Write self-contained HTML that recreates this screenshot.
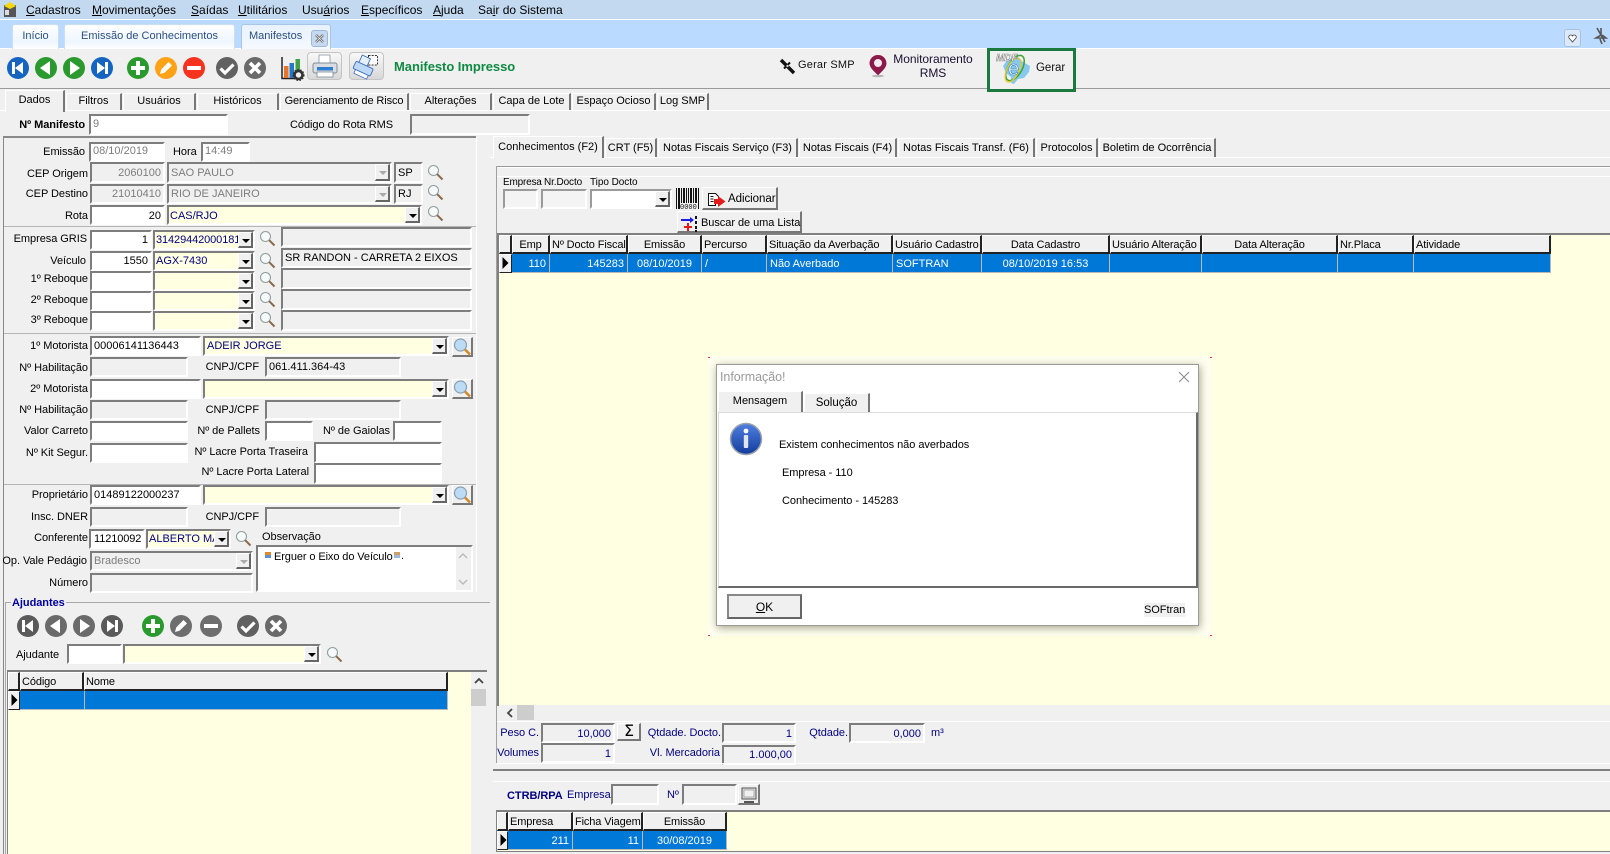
<!DOCTYPE html>
<html lang="pt"><head><meta charset="utf-8"><title>Manifestos</title>
<style>
html,body{margin:0;padding:0;width:1610px;height:854px;overflow:hidden;background:#f0f0f0}
body{position:relative;font:11px/14px "Liberation Sans",Arial,sans-serif;color:#000}
div,span.t{box-sizing:border-box}
.b{position:absolute}
.t{position:absolute;white-space:nowrap;font:11px/14px "Liberation Sans",Arial,sans-serif;margin-top:1px;letter-spacing:-.05px}
.r{left:0;text-align:right}
.i{position:absolute;box-sizing:border-box;background:#fff;border-top:2px solid #7d7d7d;border-left:2px solid #7d7d7d;border-right:2px solid #fff;border-bottom:2px solid #fff;font:11px/17px "Liberation Sans",Arial,sans-serif;padding:0 2px;overflow:hidden;white-space:nowrap}
.d{background:#f0f0f0}
.g{color:#7d7d7d}
.n{color:#000080}
.ta{text-align:right}
.c{background:#ffffe1;color:#000080;padding:0 1px}
.a{position:absolute;right:0;top:0;bottom:0;width:15px;background:#f0f0f0;border-right:2px solid #666;border-bottom:2px solid #666;border-top:1px solid #fff;border-left:1px solid #fff}
.a:after{content:"";position:absolute;left:3px;top:6px;border-left:4px solid transparent;border-right:4px solid transparent;border-top:4px solid #000}
.a.off:after{border-top-color:#aaa}
.tab{position:absolute;box-sizing:border-box;text-align:center;font:11px/20px "Liberation Sans",Arial,sans-serif;border-left:1px solid #fff;border-top:1px solid #fff;border-right:2px solid #777;white-space:nowrap;background:#f0f0f0}
.sel{line-height:19px}
.tt{position:absolute;box-sizing:border-box;top:24px;height:25px;background:linear-gradient(#fff,#eef6ff 70%,#fff);border:1px solid #c9ddf5;border-bottom:0;border-radius:3px 3px 0 0;color:#2b4f7e;font:11px/23px "Liberation Sans",Arial,sans-serif;text-align:center}
.h{position:absolute;box-sizing:border-box;background:#f0f0f0;border-top:1px solid #fff;border-left:1px solid #fff;border-right:2px solid #222;border-bottom:2px solid #222;font:11px/18px "Liberation Sans",Arial,sans-serif;letter-spacing:-.12px;padding:0 1px;white-space:nowrap;overflow:hidden}
.ce{position:absolute;box-sizing:border-box;background:#0078d7;color:#fff;border-right:1px solid #b8b8b8;border-bottom:1px solid #b8b8b8;font:11px/20px "Liberation Sans",Arial,sans-serif;padding:0 3px;white-space:nowrap;overflow:hidden}
.ctr{text-align:center}
.m{position:absolute;top:3px;font:12px/14px "Liberation Sans",Arial,sans-serif;white-space:nowrap}
.btn{position:absolute;box-sizing:border-box;background:#f0f0f0;border-top:1px solid #fff;border-left:1px solid #fff;border-right:2px solid #777;border-bottom:2px solid #777}
.ic{position:absolute;box-sizing:border-box;background:linear-gradient(#f8f8f8,#d8d8d8);border:1px solid #c4c4c4;border-radius:4px}
.sep{position:absolute;height:1px;background:#9a9a9a}
.wl{position:absolute;height:1px;background:#fff}
.f{border-color:#9a9a9a #fff #fff #9a9a9a;background:#f4f4f4}
</style></head><body>

<!-- top bars -->
<div class="b" style="left:0;top:0;width:1610px;height:19px;background:#c3d9f0"></div>
<div class="b" style="left:0;top:19px;width:1610px;height:1px;background:#fff"></div>
<div class="b" style="left:0;top:20px;width:1610px;height:28px;background:#bbdaff"></div>
<div class="b" style="left:0;top:48px;width:1610px;height:1px;background:#fff"></div>
<span class="m" style="left:26px"><u>C</u>adastros</span>
<span class="m" style="left:92px"><u>M</u>ovimentações</span>
<span class="m" style="left:191px"><u>S</u>aídas</span>
<span class="m" style="left:238px"><u>U</u>tilitários</span>
<span class="m" style="left:302px">Usu<u>á</u>rios</span>
<span class="m" style="left:361px"><u>E</u>specíficos</span>
<span class="m" style="left:433px"><u>A</u>juda</span>
<span class="m" style="left:478px">Sa<u>i</u>r do Sistema</span>

<div class="tt" style="left:12px;width:47px">Início</div>
<div class="tt" style="left:64px;width:171px">Emissão de Conhecimentos</div>
<div class="tt" style="left:241px;width:90px;text-align:left;padding-left:7px;background:linear-gradient(#e8f2ff,#f5f9ff);border-color:#a9c6ea">Manifestos</div>
<div class="b" style="left:311px;top:30px;width:17px;height:17px;background:#c5d9f1;border:1px solid #9fb8d8;border-radius:3px"></div>
<div class="b" style="left:1564px;top:29px;width:17px;height:18px;background:#dbe9fb;border:1px solid #a9c0de;border-radius:3px"></div>

<!-- toolbar -->
<div class="sep" style="left:0;top:88px;width:1610px"></div>
<div class="wl" style="left:0;top:110px;width:1610px"></div>
<div class="ic" style="left:307px;top:52px;width:35px;height:28px"></div>
<div class="ic" style="left:349px;top:52px;width:35px;height:28px"></div>
<div class="t" style="left:394px;top:59px;font-weight:bold;font-size:13px;color:#0e8a43;font-family:'Liberation Sans',sans-serif">Manifesto Impresso</div>
<div class="t" style="left:798px;top:57px;font-size:11px;color:#111;letter-spacing:.2px">Gerar SMP</div>
<div class="t" style="left:888px;top:51px;width:90px;text-align:center;font-size:12px;color:#1a1030">Monitoramento</div>
<div class="t" style="left:888px;top:65px;width:90px;text-align:center;font-size:12px;color:#1a1030">RMS</div>
<div class="b" style="left:987px;top:48px;width:89px;height:44px;border:3px solid #1a7a3e;background:#f0f0f0"></div>
<div class="t" style="left:1036px;top:60px;font-size:11.5px;color:#111">Gerar</div>

<!-- main tabs -->
<div class="tab sel" style="left:5px;top:90px;width:60px;height:22px;border-bottom:0">Dados</div>
<div class="tab" style="left:66px;top:93px;width:56px;height:17px;line-height:15px">Filtros</div>
<div class="tab" style="left:123px;top:93px;width:73px;height:17px;line-height:15px">Usuários</div>
<div class="tab" style="left:197px;top:93px;width:82px;height:17px;line-height:15px">Históricos</div>
<div class="tab" style="left:280px;top:93px;width:129px;height:17px;line-height:15px;letter-spacing:-.1px">Gerenciamento de Risco</div>
<div class="tab" style="left:410px;top:93px;width:82px;height:17px;line-height:15px">Alterações</div>
<div class="tab" style="left:493px;top:93px;width:78px;height:17px;line-height:15px">Capa de Lote</div>
<div class="tab" style="left:572px;top:93px;width:84px;height:17px;line-height:15px">Espaço Ocioso</div>
<div class="tab" style="left:657px;top:93px;width:52px;height:17px;line-height:15px">Log SMP</div>

<div class="t r" style="width:85px;top:117px;font-weight:bold">Nº Manifesto</div>
<div class="i g" style="left:89px;top:114px;width:139px;height:21px">9</div>
<div class="t" style="left:290px;top:117px">Código do Rota RMS</div>
<div class="i d" style="left:410px;top:114px;width:120px;height:21px"></div>

<!-- left panel frame -->
<div class="sep" style="left:3px;top:136px;width:473px;height:2px;background:#888"></div>
<div class="b" style="left:3px;top:136px;width:1px;height:718px;background:#888"></div>
<div class="wl" style="left:476px;top:137px;width:1px;height:455px"></div>

<div class="t r" style="width:85px;top:144px">Emissão</div>
<div class="i g" style="left:89px;top:142px;width:76px;height:20px;line-height:15px">08/10/2019</div>
<div class="t" style="left:173px;top:144px">Hora</div>
<div class="i g" style="left:201px;top:142px;width:49px;height:20px;line-height:15px">14:49</div>

<div class="t r" style="width:88px;top:166px">CEP Origem</div>
<div class="i d g ta" style="left:90px;top:162px;width:75px;height:21px;line-height:19px">2060100</div>
<div class="i d g" style="left:167px;top:162px;width:225px;height:21px;line-height:19px">SAO PAULO<div class="a off"></div></div>
<div class="i d" style="left:394px;top:162px;width:29px;height:21px;line-height:19px">SP</div>

<div class="t r" style="width:88px;top:186px">CEP Destino</div>
<div class="i d g ta" style="left:90px;top:184px;width:75px;height:20px">21010410</div>
<div class="i d g" style="left:167px;top:184px;width:225px;height:20px">RIO DE JANEIRO<div class="a off"></div></div>
<div class="i d" style="left:394px;top:184px;width:29px;height:20px">RJ</div>

<div class="t r" style="width:88px;top:208px">Rota</div>
<div class="i ta" style="left:90px;top:205px;width:75px;height:20px;line-height:19px">20</div>
<div class="i c" style="left:167px;top:205px;width:255px;height:20px;line-height:19px">CAS/RJO<div class="a"></div></div>

<div class="sep" style="left:4px;top:226px;width:472px;background:#b5b5b5"></div>

<div class="t r" style="width:87px;top:231px">Empresa GRIS</div>
<div class="i ta" style="left:90px;top:230px;width:62px;height:20px">1</div>
<div class="i c" style="left:153px;top:230px;width:102px;height:20px;letter-spacing:-.1px">31429442000181<div class="a"></div></div>
<div class="i d" style="left:281px;top:227px;width:191px;height:20px"></div>

<div class="t r" style="width:86px;top:253px">Veículo</div>
<div class="i ta" style="left:90px;top:251px;width:62px;height:20px">1550</div>
<div class="i c" style="left:153px;top:251px;width:102px;height:20px">AGX-7430<div class="a"></div></div>
<div class="i d" style="left:281px;top:248px;width:191px;height:20px;line-height:17px">SR RANDON - CARRETA 2 EIXOS</div>

<div class="t r" style="width:88px;top:271px">1º Reboque</div>
<div class="i" style="left:90px;top:271px;width:62px;height:20px"></div>
<div class="i c" style="left:153px;top:271px;width:102px;height:20px"><div class="a"></div></div>
<div class="i d" style="left:281px;top:268px;width:191px;height:21px"></div>

<div class="t r" style="width:88px;top:292px">2º Reboque</div>
<div class="i" style="left:90px;top:291px;width:62px;height:20px"></div>
<div class="i c" style="left:153px;top:291px;width:102px;height:20px"><div class="a"></div></div>
<div class="i d" style="left:281px;top:289px;width:191px;height:21px"></div>

<div class="t r" style="width:88px;top:312px">3º Reboque</div>
<div class="i" style="left:90px;top:311px;width:62px;height:20px"></div>
<div class="i c" style="left:153px;top:311px;width:102px;height:20px"><div class="a"></div></div>
<div class="i d" style="left:281px;top:310px;width:191px;height:21px"></div>

<div class="sep" style="left:4px;top:333px;width:472px;background:#b5b5b5"></div>

<div class="t r" style="width:88px;top:338px">1º Motorista</div>
<div class="i" style="left:90px;top:336px;width:111px;height:20px">00006141136443</div>
<div class="i c" style="left:203px;top:336px;width:246px;height:20px;padding:0 2px">ADEIR JORGE<div class="a"></div></div>
<div class="btn" style="left:452px;top:337px;width:21px;height:20px"></div>

<div class="t r" style="width:88px;top:360px">Nº Habilitação</div>
<div class="i d" style="left:90px;top:357px;width:98px;height:20px"></div>
<div class="t r" style="width:259px;top:359px">CNPJ/CPF</div>
<div class="i d" style="left:265px;top:357px;width:136px;height:20px">061.411.364-43</div>

<div class="t r" style="width:88px;top:381px">2º Motorista</div>
<div class="i" style="left:90px;top:379px;width:111px;height:20px"></div>
<div class="i c" style="left:203px;top:379px;width:246px;height:20px"><div class="a"></div></div>
<div class="btn" style="left:452px;top:379px;width:21px;height:20px"></div>

<div class="t r" style="width:88px;top:402px">Nº Habilitação</div>
<div class="i d" style="left:90px;top:400px;width:98px;height:20px"></div>
<div class="t r" style="width:259px;top:402px">CNPJ/CPF</div>
<div class="i d" style="left:265px;top:400px;width:136px;height:20px"></div>

<div class="t r" style="width:88px;top:423px">Valor Carreto</div>
<div class="i" style="left:90px;top:421px;width:98px;height:20px"></div>
<div class="t r" style="width:260px;top:423px">Nº de Pallets</div>
<div class="i" style="left:265px;top:421px;width:48px;height:20px"></div>
<div class="t r" style="width:390px;top:423px">Nº de Gaiolas</div>
<div class="i" style="left:393px;top:421px;width:49px;height:20px"></div>

<div class="t r" style="width:88px;top:445px">Nº Kit Segur.</div>
<div class="i" style="left:90px;top:443px;width:98px;height:20px"></div>
<div class="t r" style="width:308px;top:444px">Nº Lacre Porta Traseira</div>
<div class="i" style="left:314px;top:442px;width:128px;height:21px"></div>
<div class="t r" style="width:309px;top:464px">Nº Lacre Porta Lateral</div>
<div class="i" style="left:314px;top:463px;width:128px;height:21px"></div>

<div class="sep" style="left:4px;top:484px;width:472px;background:#b5b5b5"></div>

<div class="t r" style="width:88px;top:487px">Proprietário</div>
<div class="i" style="left:90px;top:485px;width:111px;height:20px">01489122000237</div>
<div class="i c" style="left:203px;top:485px;width:246px;height:20px"><div class="a"></div></div>
<div class="btn" style="left:452px;top:485px;width:21px;height:20px"></div>

<div class="t r" style="width:88px;top:509px">Insc. DNER</div>
<div class="i d" style="left:90px;top:507px;width:98px;height:20px"></div>
<div class="t r" style="width:259px;top:509px">CNPJ/CPF</div>
<div class="i d" style="left:265px;top:507px;width:136px;height:20px"></div>

<div class="t r" style="width:88px;top:530px">Conferente</div>
<div class="i" style="left:89px;top:529px;width:56px;height:20px;padding:0 3px;letter-spacing:-.1px">11210092</div>
<div class="i c" style="left:146px;top:529px;width:85px;height:20px">ALBERTO MARTI<div class="a"></div></div>
<div class="t" style="left:262px;top:529px">Observação</div>

<div class="t r" style="width:87px;top:553px">Op. Vale Pedágio</div>
<div class="i d g" style="left:90px;top:551px;width:163px;height:20px">Bradesco<div class="a off"></div></div>
<div class="t r" style="width:88px;top:575px">Número</div>
<div class="i d" style="left:90px;top:573px;width:163px;height:20px"></div>

<div class="i" style="left:256px;top:545px;width:217px;height:47px;padding:3px 4px 0 16px;line-height:15px;letter-spacing:-.1px">Erguer o Eixo do Veículo</div>
<div class="t" style="left:401px;top:548px">.</div>
<div class="b" style="left:456px;top:547px;width:15px;height:43px;background:#f0f0f0"></div>

<!-- ajudantes -->
<div class="b" style="left:5px;top:602px;width:485px;height:252px;border:1px solid #a8a8a8;border-bottom:0;border-right:0"></div>
<div class="t n" style="left:11px;top:595px;padding:0 1px;background:#f0f0f0;font-weight:bold;color:#0000a0">Ajudantes</div>
<div class="t" style="left:16px;top:647px">Ajudante</div>
<div class="i" style="left:67px;top:644px;width:55px;height:20px"></div>
<div class="i c" style="left:123px;top:644px;width:198px;height:20px"><div class="a"></div></div>

<div class="b" style="left:7px;top:670px;width:480px;height:184px;background:#ffffe1;border-top:2px solid #808080;border-left:1px solid #808080"></div>
<div class="h" style="left:8px;top:672px;width:12px;height:19px"></div>
<div class="h" style="left:20px;top:672px;width:64px;height:19px">Código</div>
<div class="h" style="left:84px;top:672px;width:364px;height:19px">Nome</div>
<div class="h" style="left:8px;top:691px;width:12px;height:19px;border-right:1px solid #222;border-bottom:1px solid #222"></div>
<div class="ce" style="left:20px;top:691px;width:65px;height:19px"></div>
<div class="ce" style="left:85px;top:691px;width:363px;height:19px"></div>
<div class="b" style="left:471px;top:672px;width:16px;height:182px;background:#f0f0f0"></div>
<div class="b" style="left:471px;top:689px;width:15px;height:17px;background:#cdcdcd"></div>

<!-- right tabs -->
<div class="wl" style="left:490px;top:157px;width:1120px"></div>
<div class="tab" style="left:493px;top:136px;width:111px;height:22px;border-bottom:0;line-height:21px">Conhecimentos (F2)</div>
<div class="tab" style="left:605px;top:138px;width:52px;height:19px;line-height:19px">CRT (F5)</div>
<div class="tab" style="left:658px;top:138px;width:140px;height:19px;line-height:19px">Notas Fiscais Serviço (F3)</div>
<div class="tab" style="left:799px;top:138px;width:98px;height:19px;line-height:19px">Notas Fiscais (F4)</div>
<div class="tab" style="left:898px;top:138px;width:137px;height:19px;line-height:19px">Notas Fiscais Transf. (F6)</div>
<div class="tab" style="left:1036px;top:138px;width:62px;height:19px;line-height:19px">Protocolos</div>
<div class="tab" style="left:1099px;top:138px;width:117px;height:19px;line-height:19px">Boletim de Ocorrência</div>

<div class="sep" style="left:496px;top:166px;width:1114px;height:1px"></div>
<div class="wl" style="left:497px;top:167px;width:1113px"></div>
<div class="b" style="left:496px;top:166px;width:1px;height:597px;background:#a0a0a0"></div>
<div class="wl" style="left:497px;top:176px;width:1113px"></div>

<div class="t" style="left:503px;top:175px;font-size:10px;letter-spacing:-.2px">Empresa</div>
<div class="t" style="left:544px;top:175px;font-size:10px;letter-spacing:-.1px">Nr.Docto</div>
<div class="t" style="left:590px;top:175px;font-size:10px">Tipo Docto</div>
<div class="i f" style="left:503px;top:189px;width:35px;height:20px"></div>
<div class="i f" style="left:541px;top:189px;width:46px;height:20px"></div>
<div class="i" style="left:590px;top:189px;width:82px;height:20px;border-color:#9a9a9a #fff #fff #9a9a9a"><div class="a"></div></div>
<div class="btn" style="left:702px;top:187px;width:76px;height:23px"></div>
<div class="t" style="left:728px;top:191px;font-size:11.5px">Adicionar</div>
<div class="btn" style="left:677px;top:211px;width:125px;height:22px"></div>
<div class="t" style="left:701px;top:215px">Buscar de uma Lista</div>

<!-- main grid -->
<div class="b" style="left:497px;top:233px;width:1113px;height:473px;background:#ffffe1;border-top:2px solid #808080;border-left:2px solid #808080"></div>
<div class="h" style="left:499px;top:235px;width:13px;height:19px"></div>
<div class="h ctr" style="left:512px;top:235px;width:38px;height:19px">Emp</div>
<div class="h" style="left:550px;top:235px;width:78px;height:19px">Nº Docto Fiscal</div>
<div class="h ctr" style="left:628px;top:235px;width:74px;height:19px">Emissão</div>
<div class="h" style="left:702px;top:235px;width:65px;height:19px">Percurso</div>
<div class="h" style="left:767px;top:235px;width:126px;height:19px">Situação da Averbação</div>
<div class="h" style="left:893px;top:235px;width:89px;height:19px">Usuário Cadastro</div>
<div class="h ctr" style="left:982px;top:235px;width:128px;height:19px">Data Cadastro</div>
<div class="h" style="left:1110px;top:235px;width:92px;height:19px">Usuário Alteração</div>
<div class="h ctr" style="left:1202px;top:235px;width:136px;height:19px">Data Alteração</div>
<div class="h" style="left:1338px;top:235px;width:76px;height:19px">Nr.Placa</div>
<div class="h" style="left:1414px;top:235px;width:137px;height:19px">Atividade</div>

<div class="h" style="left:499px;top:254px;width:13px;height:19px;border-right:1px solid #222;border-bottom:1px solid #222"></div>
<div class="ce ta" style="left:512px;top:254px;width:38px;height:19px">110</div>
<div class="ce ta" style="left:550px;top:254px;width:78px;height:19px">145283</div>
<div class="ce ctr" style="left:628px;top:254px;width:74px;height:19px">08/10/2019</div>
<div class="ce" style="left:702px;top:254px;width:65px;height:19px">/</div>
<div class="ce" style="left:767px;top:254px;width:126px;height:19px">Não Averbado</div>
<div class="ce" style="left:893px;top:254px;width:89px;height:19px">SOFTRAN</div>
<div class="ce ctr" style="left:982px;top:254px;width:128px;height:19px">08/10/2019 16:53</div>
<div class="ce" style="left:1110px;top:254px;width:92px;height:19px"></div>
<div class="ce" style="left:1202px;top:254px;width:136px;height:19px"></div>
<div class="ce" style="left:1338px;top:254px;width:76px;height:19px"></div>
<div class="ce" style="left:1414px;top:254px;width:137px;height:19px"></div>

<!-- h scrollbar -->
<div class="b" style="left:499px;top:705px;width:1111px;height:16px;background:#f0f0f0"></div>
<div class="b" style="left:517px;top:705px;width:17px;height:15px;background:#cdcdcd"></div>
<div class="wl" style="left:497px;top:721px;width:1113px"></div>

<!-- totals -->
<div class="t r n" style="width:539px;top:725px">Peso C.</div>
<div class="i d n ta" style="left:541px;top:723px;width:74px;height:20px;line-height:19px">10,000</div>
<div class="btn" style="left:617px;top:723px;width:24px;height:18px"></div>
<div class="t" style="left:617px;top:721px;width:24px;text-align:center;font:16px/18px 'DejaVu Sans',sans-serif">Σ</div>
<div class="t r n" style="width:721px;top:725px">Qtdade. Docto.</div>
<div class="i d n ta" style="left:722px;top:723px;width:74px;height:20px;line-height:19px">1</div>
<div class="t r n" style="width:848px;top:725px">Qtdade.</div>
<div class="i d n ta" style="left:849px;top:723px;width:76px;height:20px;line-height:19px">0,000</div>
<div class="t n" style="left:931px;top:725px">m³</div>
<div class="t r n" style="width:539px;top:745px">Volumes</div>
<div class="i d n ta" style="left:541px;top:743px;width:74px;height:20px;line-height:19px">1</div>
<div class="t r n" style="width:720px;top:745px">Vl. Mercadoria</div>
<div class="i d n ta" style="left:722px;top:745px;width:74px;height:20px">1.000,00</div>
<div class="wl" style="left:497px;top:763px;width:1113px"></div>

<div class="sep" style="left:493px;top:769px;width:1117px;height:2px;background:#808080"></div>
<div class="wl" style="left:493px;top:781px;width:1117px"></div>

<div class="t n" style="left:507px;top:788px;font-weight:bold">CTRB/RPA</div>
<div class="t n" style="left:567px;top:787px">Empresa</div>
<div class="i d" style="left:611px;top:784px;width:48px;height:21px"></div>
<div class="t n" style="left:667px;top:787px">Nº</div>
<div class="i d" style="left:682px;top:784px;width:55px;height:21px"></div>
<div class="btn" style="left:738px;top:784px;width:22px;height:21px"></div>

<!-- bottom grid -->
<div class="b" style="left:496px;top:810px;width:1114px;height:42px;background:#ffffe1;border-top:2px solid #808080;border-left:1px solid #808080;border-bottom:1px solid #808080"></div>
<div class="h" style="left:497px;top:812px;width:11px;height:19px"></div>
<div class="h" style="left:508px;top:812px;width:65px;height:19px">Empresa</div>
<div class="h" style="left:573px;top:812px;width:70px;height:19px">Ficha Viagem</div>
<div class="h ctr" style="left:643px;top:812px;width:84px;height:19px">Emissão</div>
<div class="h" style="left:497px;top:831px;width:11px;height:19px;border-right:1px solid #222;border-bottom:1px solid #222"></div>
<div class="ce ta" style="left:508px;top:831px;width:65px;height:19px">211</div>
<div class="ce ta" style="left:573px;top:831px;width:70px;height:19px">11</div>
<div class="ce ctr" style="left:643px;top:831px;width:84px;height:19px">30/08/2019</div>

<!-- icon overlay -->
<svg class="b" style="left:0;top:0;pointer-events:none" width="1610" height="854" viewBox="0 0 1610 854" xmlns="http://www.w3.org/2000/svg">
<defs>
<g id="first"><rect x="-6" y="-6" width="3" height="12" fill="#fff"/><path d="M5-6V6L-3 0z" fill="#fff"/></g>
<g id="prev"><path d="M4-7V7L-6 0z" fill="#fff"/></g>
<g id="next"><path d="M-4-7V7L6 0z" fill="#fff"/></g>
<g id="last"><rect x="3" y="-6" width="3" height="12" fill="#fff"/><path d="M-5-6V6L3 0z" fill="#fff"/></g>
<g id="plus"><path d="M-2-7H2V-2H7V2H2V7H-2V2H-7V-2H-2z" fill="#fff"/></g>
<g id="pen"><path d="M-6 6l1.200-4.500L2.500-6 6-2.500-1.500 4.800z" fill="#fff"/></g>
<g id="minus"><rect x="-7" y="-2" width="14" height="4" fill="#fff"/></g>
<g id="chk"><path d="M-6.500 0.500l4.500 4.500 8.500-8.500" fill="none" stroke="#fff" stroke-width="3.200"/></g>
<g id="xx"><path d="M-5-5L5 5M5-5L-5 5" fill="none" stroke="#fff" stroke-width="3.600"/></g>
<g id="mag"><circle cx="-1.500" cy="-1.500" r="5" fill="#f7fafa" stroke="#8f9f9f" stroke-width="1.100"/><path d="M2.200 2.200L7.500 7.500" stroke="#8a6a4a" stroke-width="2"/></g>
<g id="magb"><circle cx="-1.500" cy="-2" r="6" fill="#bcdcf5" stroke="#8aa0b0" stroke-width="1.200"/><path d="M3 2.500L8 7.500" stroke="#d08a2a" stroke-width="2.600"/></g>
<g id="arr"><path d="M-2.500-6V6L3.500 0z" fill="#000"/></g>
<linearGradient id="gi" x1="0" y1="0" x2="0" y2="1"><stop offset="0" stop-color="#4f7fe0"/><stop offset="1" stop-color="#123c9c"/></linearGradient>
</defs>

<!-- app icon -->
<rect x="4" y="5" width="12" height="12" fill="#555"/><path d="M4 6l6-4 6 4-6 3z" fill="#f5d90a"/><rect x="5" y="10" width="4" height="5" fill="#ddd"/>

<!-- tab close -->
<path d="M316 35l7 7M323 35l-7 7" stroke="#666" stroke-width="2.400"/><path d="M316 35l7 7M323 35l-7 7" stroke="#eee" stroke-width=".8"/>
<path d="M1572.500 42l-3.500-4a2 2 0 0 1 3.500-2 2 2 0 0 1 3.500 2z" fill="#fff" stroke="#444" stroke-width=".8"/>
<path d="M1597 28l8 14M1601 28v7l-5 3h10l-4-3M1600 39l2 5" fill="none" stroke="#555" stroke-width="1.600"/>

<!-- main toolbar buttons -->
<circle cx="18" cy="68" r="11" fill="#1565c0"/><use href="#first" x="18" y="68"/>
<circle cx="46" cy="68" r="11" fill="#2a9a2f"/><use href="#prev" x="46" y="68"/>
<circle cx="74" cy="68" r="11" fill="#2a9a2f"/><use href="#next" x="74" y="68"/>
<circle cx="102" cy="68" r="11" fill="#1565c0"/><use href="#last" x="102" y="68"/>
<circle cx="138" cy="68" r="11" fill="#2a9a2f"/><use href="#plus" x="138" y="68"/>
<circle cx="166" cy="68" r="11" fill="#ffa216"/><use href="#pen" x="166" y="68"/>
<circle cx="194" cy="68" r="11" fill="#f5331f"/><use href="#minus" x="194" y="68"/>
<circle cx="227" cy="68" r="11" fill="#616161"/><use href="#chk" x="227" y="68"/>
<circle cx="255" cy="68" r="11" fill="#6a6a6a"/><use href="#xx" x="255" y="68"/>

<!-- chart -->
<path d="M282 57v21.500h17" fill="none" stroke="#222" stroke-width="1.500"/>
<rect x="284" y="66" width="4.500" height="12" fill="#e8742a"/><rect x="289.500" y="63" width="4.500" height="15" fill="#2278c9"/><rect x="295.500" y="59" width="4.500" height="13" fill="#43a047"/>
<circle cx="298.500" cy="75" r="4" fill="none" stroke="#333" stroke-width="2.600"/><circle cx="298.500" cy="75" r="5.400" fill="none" stroke="#333" stroke-width="1.300" stroke-dasharray="1.500 1.500"/>
<!-- printer 1 -->
<rect x="319" y="55" width="11" height="10" fill="#fff" stroke="#8a97a3" stroke-width=".8"/>
<rect x="313" y="63" width="24" height="10" rx="2" fill="#d9dde1" stroke="#7f8c99"/>
<rect x="317" y="67" width="16" height="3.500" fill="#2f7dd0"/>
<rect x="317" y="72" width="16" height="5" fill="#fff" stroke="#7f8c99" stroke-width=".8"/>
<!-- printer 2 -->
<rect x="368.500" y="55.500" width="9" height="9.500" fill="#fff" stroke="#333" stroke-dasharray="2 1.200"/>
<g transform="translate(364,68) rotate(25)">
<rect x="-7" y="-11" width="9" height="9" fill="#e6f1fc" stroke="#3f6fc0" stroke-width=".9"/>
<rect x="-10" y="-3" width="19" height="8" rx="1.500" fill="#bcd8f5" stroke="#3f6fc0" stroke-width=".9"/>
<rect x="-7" y="5" width="14" height="4" fill="#fff" stroke="#3f6fc0" stroke-width=".8"/></g>

<!-- satellite -->
<path d="M781 60l13 13" stroke="#111" stroke-width="3.400"/><path d="M784 68.500l6-6" stroke="#111" stroke-width="2"/><circle cx="787.500" cy="66" r="1.200" fill="#ccc"/>
<!-- pin -->
<path d="M878 55c-5 0-8.500 3.800-8.500 8.500 0 4.500 5.500 8.500 8.500 12 3-3.500 8.500-7.500 8.500-12 0-4.700-3.500-8.500-8.500-8.500z" fill="#8b1a4b"/><circle cx="878" cy="63" r="4" fill="#f4e9ee"/><ellipse cx="878" cy="76" rx="6" ry="1.300" fill="#b5b5b5"/>
<!-- MDFe -->
<path d="M1008 59l10-2 5 5 7 4-1 6-5 6-6 1-4 5-3-1 0-6-5-4-3-7z" fill="#86c8ef"/>
<ellipse cx="1015" cy="68" rx="7" ry="14" transform="rotate(30 1015 68)" fill="none" stroke="#3ba33a" stroke-width="1.500"/>
<ellipse cx="1013" cy="70" rx="6" ry="13" transform="rotate(26 1013 70)" fill="none" stroke="#ecc81f" stroke-width="1.200"/>
<text x="1008" y="75" font-family="Liberation Sans,sans-serif" font-size="20" fill="#fff" stroke="#2f7fb5" stroke-width=".6">e</text>
<text x="996" y="61" font-family="Liberation Sans,sans-serif" font-size="10" font-weight="bold" font-style="italic" fill="#fff" stroke="#777" stroke-width=".5">MDF</text>

<!-- magnifiers -->
<use href="#mag" x="435" y="172"/><use href="#mag" x="435" y="192"/><use href="#mag" x="435" y="213"/>
<use href="#mag" x="267" y="238"/><use href="#mag" x="267" y="260"/><use href="#mag" x="267" y="279"/><use href="#mag" x="267" y="299"/><use href="#mag" x="267" y="319"/>
<use href="#magb" x="462" y="347"/><use href="#magb" x="462" y="389"/><use href="#magb" x="462" y="495"/>
<use href="#mag" x="243" y="538"/><use href="#mag" x="334" y="654"/>

<!-- memo -->
<rect x="265" y="552" width="6" height="3" fill="#e08a2c"/><rect x="265" y="555" width="6" height="3" fill="#5f8fd0"/>
<rect x="394" y="552" width="6" height="3" fill="#cfa16a"/><rect x="394" y="555" width="6" height="3" fill="#9db7d8"/>
<path d="M459 558l4-4 4 4M459 580l4 4 4-4" fill="none" stroke="#bbb" stroke-width="1.500"/>

<!-- ajudantes buttons -->
<circle cx="28" cy="626" r="11" fill="#5a5a5a"/><use href="#first" x="28" y="626"/>
<circle cx="56" cy="626" r="11" fill="#6a6a6a"/><use href="#prev" x="56" y="626"/>
<circle cx="84" cy="626" r="11" fill="#6a6a6a"/><use href="#next" x="84" y="626"/>
<circle cx="112" cy="626" r="11" fill="#5a5a5a"/><use href="#last" x="112" y="626"/>
<circle cx="153" cy="626" r="11" fill="#2a9a2f"/><use href="#plus" x="153" y="626"/>
<circle cx="181" cy="626" r="11" fill="#6e6e6e"/><use href="#pen" x="181" y="626"/>
<circle cx="211" cy="626" r="11" fill="#6e6e6e"/><use href="#minus" x="211" y="626"/>
<circle cx="248" cy="626" r="11" fill="#616161"/><use href="#chk" x="248" y="626"/>
<circle cx="276" cy="626" r="11" fill="#6a6a6a"/><use href="#xx" x="276" y="626"/>

<use href="#arr" x="14" y="700"/><use href="#arr" x="505" y="263"/><use href="#arr" x="503" y="840"/>
<path d="M475 683l4-4 4 4M512 709l-4 4 4 4" fill="none" stroke="#444" stroke-width="1.800"/>

<!-- barcode -->
<g fill="#111"><rect x="676" y="188" width="1" height="21"/><rect x="678" y="188" width="2" height="21"/><rect x="681" y="188" width="1" height="21"/><rect x="683" y="188" width="2" height="21"/><rect x="686" y="188" width="1" height="21"/><rect x="688" y="188" width="1" height="21"/><rect x="690" y="188" width="2" height="21"/><rect x="693" y="188" width="1" height="21"/><rect x="695" y="188" width="2" height="21"/><rect x="698" y="188" width="1" height="21"/></g>
<rect x="680" y="203" width="18" height="6" fill="#f0f0f0"/>
<text x="680" y="209" font-family="Liberation Mono,monospace" font-size="7" fill="#111">0000</text>
<!-- adicionar icon -->
<path d="M708.500 193.500h7l3 3v3h-3v6h-7z" fill="#fff" stroke="#111"/><path d="M710.500 196.500h3M710.500 199h3M710.500 201.500h3" stroke="#111"/><path d="M714 199h4v-3l7.500 5.500-7.500 5.500v-3h-4z" fill="#e21b1b"/>
<!-- buscar icon -->
<path d="M681 219h9v-2l4 3-4 3v-2h-9z" fill="#1a1ae0"/><path d="M684 226h3v-3h2v3h3v2h-3v3h-2v-3h-3z" fill="#e21b1b"/><g fill="#111"><rect x="695" y="216" width="2" height="3"/><rect x="695" y="221" width="2" height="3"/><rect x="695" y="226" width="2" height="3"/><rect x="695" y="230" width="2" height="2"/></g>
<!-- monitor btn -->
<rect x="742" y="788" width="14" height="11" fill="#ddd" stroke="#555"/><rect x="744" y="790" width="10" height="7" fill="#f0f0f0" stroke="#888" stroke-width=".6"/><path d="M744 802h10" stroke="#555" stroke-width="2"/>
</svg>

<!-- dialog -->
<div class="b" style="left:708px;top:356px;width:504px;height:280px;background:#fffff0"></div>
<div class="b" style="left:708px;top:357px;width:2px;height:1px;background:#e03030"></div>
<div class="b" style="left:1210px;top:357px;width:2px;height:1px;background:#e03030"></div>
<div class="b" style="left:708px;top:635px;width:2px;height:1px;background:#e03030"></div>
<div class="b" style="left:1210px;top:635px;width:2px;height:1px;background:#e03030"></div>
<div class="b" style="left:716px;top:364px;width:483px;height:262px;background:#fff;border:1px solid #9a9a9a;box-shadow:1px 2px 8px rgba(90,90,60,.55)">
  <div class="t" style="left:3px;top:4px;margin:0;font-size:12.5px;line-height:16px;color:#9a9a9a">Informação!</div>
  <svg class="b" style="left:461px;top:6px" width="12" height="12" viewBox="0 0 12 12"><path d="M1 1l10 10M11 1L1 11" stroke="#8a8a8a" stroke-width="1"/></svg>
  <div class="tab" style="left:1px;top:26px;width:85px;height:22px;line-height:18px;font-size:11px;border-right:2px solid #777">Mensagem</div>
  <div class="tab" style="left:87px;top:28px;width:66px;height:19px;line-height:19px;font-size:11.5px">Solução</div>
  <div class="b" style="left:1px;top:47px;width:480px;height:176px;background:#fff;border-top:1px solid #ddd;border-left:1px solid #ddd;border-right:2px solid #6a6a6a;border-bottom:2px solid #6a6a6a"></div>
  <svg class="b" style="left:12px;top:57px" width="34" height="34" viewBox="0 0 34 34"><circle cx="17" cy="17" r="15.500" fill="url(#gi)" stroke="#9aa3ad" stroke-width="1.500"/><circle cx="17" cy="9" r="2.400" fill="#fff"/><rect x="14.800" y="13" width="4.400" height="13" rx="1" fill="#dfe6f0"/></svg>
  <div class="t" style="left:62px;top:72px">Existem conhecimentos não averbados</div>
  <div class="t" style="left:65px;top:100px">Empresa - 110</div>
  <div class="t" style="left:65px;top:128px">Conhecimento - 145283</div>
  <div class="b" style="left:10px;top:229px;width:75px;height:25px;background:#f0f0f0;border:2px solid #666;border-top-color:#888;border-left-color:#888;text-align:center;font:12px/22px 'Liberation Sans',sans-serif"><u>O</u>K</div>
  <div class="t" style="left:427px;top:237px;background:#f0f0f0;padding:0">SOFtran</div>
</div>
</body></html>
